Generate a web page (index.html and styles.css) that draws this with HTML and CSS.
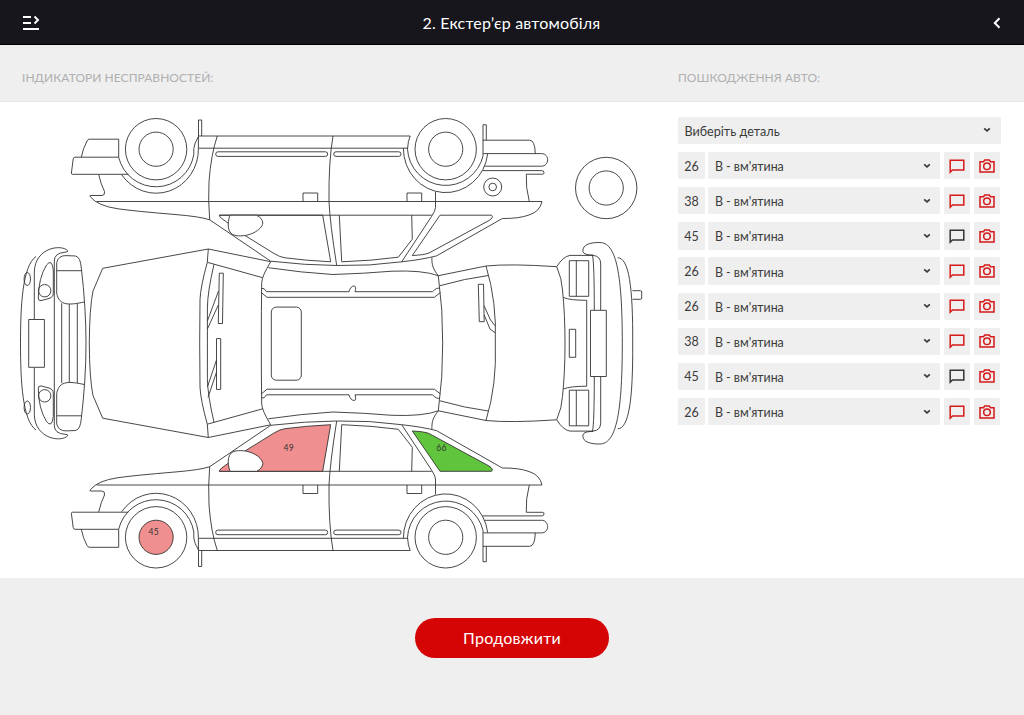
FILE: index.html
```html
<!DOCTYPE html>
<html lang="uk">
<head>
<meta charset="utf-8">
<title>Екстер’єр автомобіля</title>
<link rel="stylesheet" href="styles.css">
</head>
<body>
<svg class="defs" aria-hidden="true">
  <symbol id="chevron" viewBox="0 0 8 6"><path d="M1.200 1.300 4 3.900 6.800 1.300"/></symbol>
  <symbol id="note" viewBox="0 0 16 15"><path d="M1.200 13.200V1.200H14.800V11H3.400Z"/></symbol>
  <symbol id="camera" viewBox="0 0 16 14"><path d="M1 2.700H4.500L5.700 1H10.300L11.500 2.700H15V13H1Z"/><circle cx="8" cy="7.200" r="3.300"/></symbol>
</svg>
<header class="topbar">
  <svg class="menu-icon" viewBox="0 0 18 16"><path d="M1 2H9M1 8H9M1 14H17M12.500 1.500 16 5 12.500 8.500"/></svg>
  <h1 class="title">2. Екстер’єр автомобіля</h1>
  <svg class="back-icon" viewBox="0 0 8 12"><path d="M6.500 1.300 1.800 6 6.500 10.700"/></svg>
</header>
<div class="captions">
  <h2 class="caption caption-faults">ІНДИКАТОРИ НЕСПРАВНОСТЕЙ:</h2>
  <h2 class="caption caption-damage">ПОШКОДЖЕННЯ АВТО:</h2>
</div>
<main class="content">
  <svg class="diagram" viewBox="0 102 660 476">
    <defs>
      <g id="side">
        <circle cx="156.100" cy="537.300" r="30.700"/><circle class="hub" cx="156.100" cy="537.300" r="17.100"/>
        <circle cx="445.700" cy="537.300" r="30.700"/><circle cx="445.700" cy="537.300" r="17.100"/>
        <path d="M121.700 511.700A42.300 44 0 0 1 198.400 538.300V550.500M118.700 529.200A38.300 38.300 0 0 1 193.800 532V538Q194.200 543 198.500 550"/>
        <path d="M128.300 512.200H72.500Q71.300 512.200 71.400 513.500L73.200 527.500Q73.500 529.300 75 529.300H118.700M81.300 529.300Q83 538 87 545.500Q87.700 547.300 89.500 547.300H118.700V529.300"/>
        <path d="M98.700 511.900Q101 502 104.500 495Q105.200 491.200 102 491H91Q89 491 90.500 489.500Q98 480.500 118 477.700Q135 475.300 175 472Q200 470 209.700 466.700L270.700 425.300Q305 421.300 336.700 421Q370 420.300 401.700 424.700Q423 427 436.700 430.700L502.300 468Q519 467.800 529 471.500Q540 475 542 485H96.700"/>
        <path d="M209.700 466.700Q208 486 209 505Q211 532 217.300 550.500M336.700 421Q330 463 329 485Q328.500 525 333 550.500M198.500 538.300H408M198.500 550.500H410.200"/>
        <rect x="215.700" y="530.100" width="112" height="4.600" rx="2.300"/><rect x="333.700" y="530.100" width="67.300" height="4.600" rx="2.300"/>
        <path d="M303 485V493.500H317.700V485M407 485V493.500H421.700V485M198.500 550.500V566.500H201.700V550.500M483 546V561.700H486.300V546.300"/>
        <path d="M219.300 471.300H431.700M339.300 471.300 341.700 424.700Q372 425.700 398.300 429.300L412.300 447.300 411.700 471.300M401.700 424.700 431.500 470Q435.500 476 435.500 479V494.500"/>
        <path d="M403.400 538.300A42.300 44 0 0 1 487.700 532.700M410.200 550.500Q408 546 407.500 537.300A38.300 38.300 0 0 1 483 530.500V546.300"/>
        <path d="M529.300 485Q525.600 499 526.300 512.300H542.500Q544.300 512.300 544 514Q543.900 515.900 541.500 515.900H482.500M484.500 520.300H541.500C549.500 520.300 549.800 532.900 541.500 532.900H483.200M535.300 532.900Q535 546.300 529.500 546.300H483"/>
      </g>
      <g id="glass">
        <path class="front-glass" d="M219.300 471.300Q219.500 469.500 222 467.800L245 451 274 433Q280 429.300 285 428.700Q305 426 330.700 424.700L322.700 471.300Z"/>
        <path class="rear-glass" d="M412.300 431Q424 431.500 429 433.500L489 466Q494 469.200 491.500 471.300H440Z"/>
        <path class="mirror" d="M230 471.300C227 463 227 452 236 450.900C249 449 262 456.500 262.800 463.500Q262.500 468.500 256.500 471.300Z"/>
      </g>
      <g id="half">
        <path d="M20.500 343.300C20.500 305 22.500 266 36 256.500M34.300 319V272C35 247 62 244 67.700 250.800Q68.500 252 65 252.200Q54.300 253 54.300 261V343.300"/>
        <path d="M56.700 293V262.500Q58.500 255.500 66 255.600L75.500 256Q80.500 257 81.300 268Q86 307 86 343.300M56.700 293C59 306.500 70 305 84.300 302M56.700 270.700H81.500M61.700 303.300V343.300M69.300 304.300V343.300M77.300 303.500V343.300"/>
        <ellipse cx="27.300" cy="279" rx="3.200" ry="6.500"/><circle cx="44.700" cy="290.700" r="6.200"/>
        <path d="M38.300 298Q38.500 278 46.500 265Q52 258 53.300 270V293Q53.600 297 49 298.500L41 300.600Q38 300.800 38.300 298Z"/>
        <path d="M89.300 343.300Q89.500 308 93 291L102.700 268.300 208.300 249 270.700 261.700Q262 276 261.700 282.500Q261.300 310 261.300 343.300M208.300 249 207.300 262.300Q200.500 287 200 299.500L199.700 343.300M207.300 262.300 262.700 277.700M214 264.300Q207.500 292 207.400 308V343.300"/>
        <path d="M268.300 267.700Q302 272.700 333 274.500Q365 273.500 392 271.200Q423 270 438.300 275.700C433 269 431.700 265 431.900 257.500M438.300 275.700Q443 310 442.700 343.300"/>
        <path d="M261.300 288.500Q264.300 287.300 266.500 291.700H349Q350.500 285.900 354.500 286Q356.500 286.500 355 291.700H432.500Q437 287 439.700 288.500M261.300 292.500 267 297.300H434.300L440.500 292.500"/>
        <path d="M438.300 275.700 486 266Q497 302 495.300 343.300M440 285.700Q465 278.500 488.300 275.500M486 266Q510 263.500 556.700 266.700Q562 279 562.500 290Q565 314 565 343.300M563.400 297.500Q570 300.300 586.700 300.300V343.300"/>
        <path d="M556.700 266.700Q563 256.500 570 255.400H593Q600.700 256 600.700 264V310.300M592.500 255.400Q594.300 264 594.300 310.300"/>
        <path d="M569.300 260.700H588.700V296.300H569.300ZM576.300 260.700V296.300"/>
        <path d="M593 255Q584 255.300 582.900 251.500C582 244 592 242.300 600 242.500C615 243 622.300 268 622.300 343.300M617.700 257.700C629 258 633 287 632.700 343.300"/>
      </g>
    </defs>
    <g class="outline">
      <g transform="translate(0 686.500) scale(1 -1)"><use href="#side"/><use href="#glass"/></g>
      <circle cx="492.700" cy="187" r="9"/><circle cx="492.700" cy="187" r="3.800"/>
      <circle cx="606.200" cy="188" r="30.700"/><circle cx="606.200" cy="188" r="17.100"/>
      <use href="#half"/>
      <use href="#half" transform="translate(0 686.500) scale(1 -1)"/>
      <rect class="plate" x="28.700" y="319.500" width="15.700" height="47.800"/>
      <rect class="plate" x="590.500" y="310.300" width="15.800" height="66.200"/>
      <rect x="569.300" y="329.300" width="6.400" height="28"/>
      <rect x="271.300" y="307.100" width="30" height="73.100" rx="5"/>
      <path d="M219.300 273.200H223.300L222.500 323.500H218.300ZM218.500 291 207.400 321M218.300 305 207.400 329M216.500 338.600H220.700V389.400H216.500ZM216.500 360 207.400 387M216.500 372 208 397.500"/>
      <path d="M478.300 284.300H483.500L484.200 321.700H479.300ZM484 305.700 490.500 320 495 325.700M484.200 315 490 329 495 332.700M632.500 290.700H640.500Q641.700 290.700 641.700 292V298Q641.700 299.300 640.500 299.300H632.500"/>
      <g class="marked"><use href="#side"/><use href="#glass"/></g>
    </g>
    <g class="marks"><text x="288.700" y="451.300">49</text><text x="153.800" y="535.200">45</text><text x="441.500" y="451.300">66</text></g>
  </svg>
  <section class="damage">
    <div class="field field-part">Виберіть деталь<svg class="chevron"><use href="#chevron"/></svg></div>
    <div class="row"><span class="number">26</span><div class="field">В - вм'ятина<svg class="chevron"><use href="#chevron"/></svg></div><button class="tool"><svg class="note"><use href="#note"/></svg></button><button class="tool"><svg class="camera"><use href="#camera"/></svg></button></div>
    <div class="row"><span class="number">38</span><div class="field">В - вм'ятина<svg class="chevron"><use href="#chevron"/></svg></div><button class="tool"><svg class="note"><use href="#note"/></svg></button><button class="tool"><svg class="camera"><use href="#camera"/></svg></button></div>
    <div class="row"><span class="number">45</span><div class="field">В - вм'ятина<svg class="chevron"><use href="#chevron"/></svg></div><button class="tool tool-empty"><svg class="note"><use href="#note"/></svg></button><button class="tool"><svg class="camera"><use href="#camera"/></svg></button></div>
    <div class="row"><span class="number">26</span><div class="field">В - вм'ятина<svg class="chevron"><use href="#chevron"/></svg></div><button class="tool"><svg class="note"><use href="#note"/></svg></button><button class="tool"><svg class="camera"><use href="#camera"/></svg></button></div>
    <div class="row"><span class="number">26</span><div class="field">В - вм'ятина<svg class="chevron"><use href="#chevron"/></svg></div><button class="tool"><svg class="note"><use href="#note"/></svg></button><button class="tool"><svg class="camera"><use href="#camera"/></svg></button></div>
    <div class="row"><span class="number">38</span><div class="field">В - вм'ятина<svg class="chevron"><use href="#chevron"/></svg></div><button class="tool"><svg class="note"><use href="#note"/></svg></button><button class="tool"><svg class="camera"><use href="#camera"/></svg></button></div>
    <div class="row"><span class="number">45</span><div class="field">В - вм'ятина<svg class="chevron"><use href="#chevron"/></svg></div><button class="tool tool-empty"><svg class="note"><use href="#note"/></svg></button><button class="tool"><svg class="camera"><use href="#camera"/></svg></button></div>
    <div class="row"><span class="number">26</span><div class="field">В - вм'ятина<svg class="chevron"><use href="#chevron"/></svg></div><button class="tool"><svg class="note"><use href="#note"/></svg></button><button class="tool"><svg class="camera"><use href="#camera"/></svg></button></div>
  </section>
</main>
<footer class="footer"><button class="continue">Продовжити</button></footer>
</body>
</html>
```
FILE: styles.css
```css
* { box-sizing: border-box; }
body {
  margin: 0;
  height: 715px;
  display: flex;
  flex-direction: column;
  background: #efefef;
  color: #3b3b3b;
  font-family: Lato, "Noto Sans", sans-serif;
  overflow: hidden;
}
svg { display: block; fill: none; stroke: currentColor; }
.defs { display: none; }
.topbar {
  height: 45px;
  flex: none;
  display: grid;
  grid-template-columns: 1fr auto 1fr;
  align-items: center;
  padding: 1px 23px 0 22px;
  background: #16161c;
  border-bottom: 1px solid #000;
  color: #fff;
}
.menu-icon { width: 18px; height: 16px; stroke-width: 1.9; margin-top: 1px; }
.back-icon { width: 8px; height: 12px; stroke-width: 2; justify-self: end; margin-top: 1px; }
.title { margin: 0 0 1px; font-size: 16px; font-weight: 400; letter-spacing: 0.18px; }
.captions {
  height: 57px;
  flex: none;
  display: flex;
  align-items: center;
  padding: 9px 22px 0;
  border-bottom: 1px solid #e6e6e6;
}
.caption { margin: 0; font-size: 12px; font-weight: 400; letter-spacing: 0.04px; color: #b0b0b0; white-space: nowrap; }
.caption-faults { width: 656px; }
.content { height: 476px; flex: none; display: flex; background: #fff; }
.diagram { width: 660px; height: 476px; flex: none; }
.outline { color: #333; stroke-width: 0.9; stroke-linejoin: round; }
.plate, .mirror { fill: #fff; }
.marked { --hub: #ef8f8f; --front: #ef8f8f; --rear: #61c43d; }
.hub { fill: var(--hub, none); }
.front-glass { fill: var(--front, none); }
.rear-glass { fill: var(--rear, none); }
.marks { fill: #333; stroke: none; font-size: 8.500px; text-anchor: middle; letter-spacing: 0.3px; }
.damage { width: 322.500px; margin-left: 18px; padding-top: 14.500px; display: flex; flex-direction: column; gap: 7.900px; }
.row { display: grid; grid-template-columns: 27px 232px 26.500px 26.500px; column-gap: 3.400px; height: 27.250px; }
.field, .number, .tool { background: #efefef; border-radius: 1px; }
.field {
  display: flex;
  align-items: center;
  justify-content: space-between;
  padding: 2px 9.500px 0 6.500px;
  font-size: 12.400px;
}
.field-part { height: 27.600px; padding-right: 10px; font-size: 12.600px; }
.number { display: flex; align-items: center; justify-content: center; font-size: 12.500px; padding-top: 1px; }
.chevron { width: 8px; height: 6px; stroke-width: 1.7; margin-bottom: 2px; }
.tool { border: 0; padding: 0; display: flex; align-items: center; justify-content: center; color: #d61a1a; }
.tool-empty { color: #333; }
.note { width: 16px; height: 15px; stroke-width: 1.5; margin-top: 1px; }
.camera { width: 16px; height: 14px; stroke-width: 1.5; }
.footer { display: flex; justify-content: center; padding-top: 40px; }
.continue {
  width: 194px;
  height: 40px;
  border: 0;
  border-radius: 20px;
  background: #d50505;
  color: #fff;
  padding: 0 0 2px;
  font: 400 16px Lato, "Noto Sans", sans-serif;
  letter-spacing: 0.28px;
}
```
